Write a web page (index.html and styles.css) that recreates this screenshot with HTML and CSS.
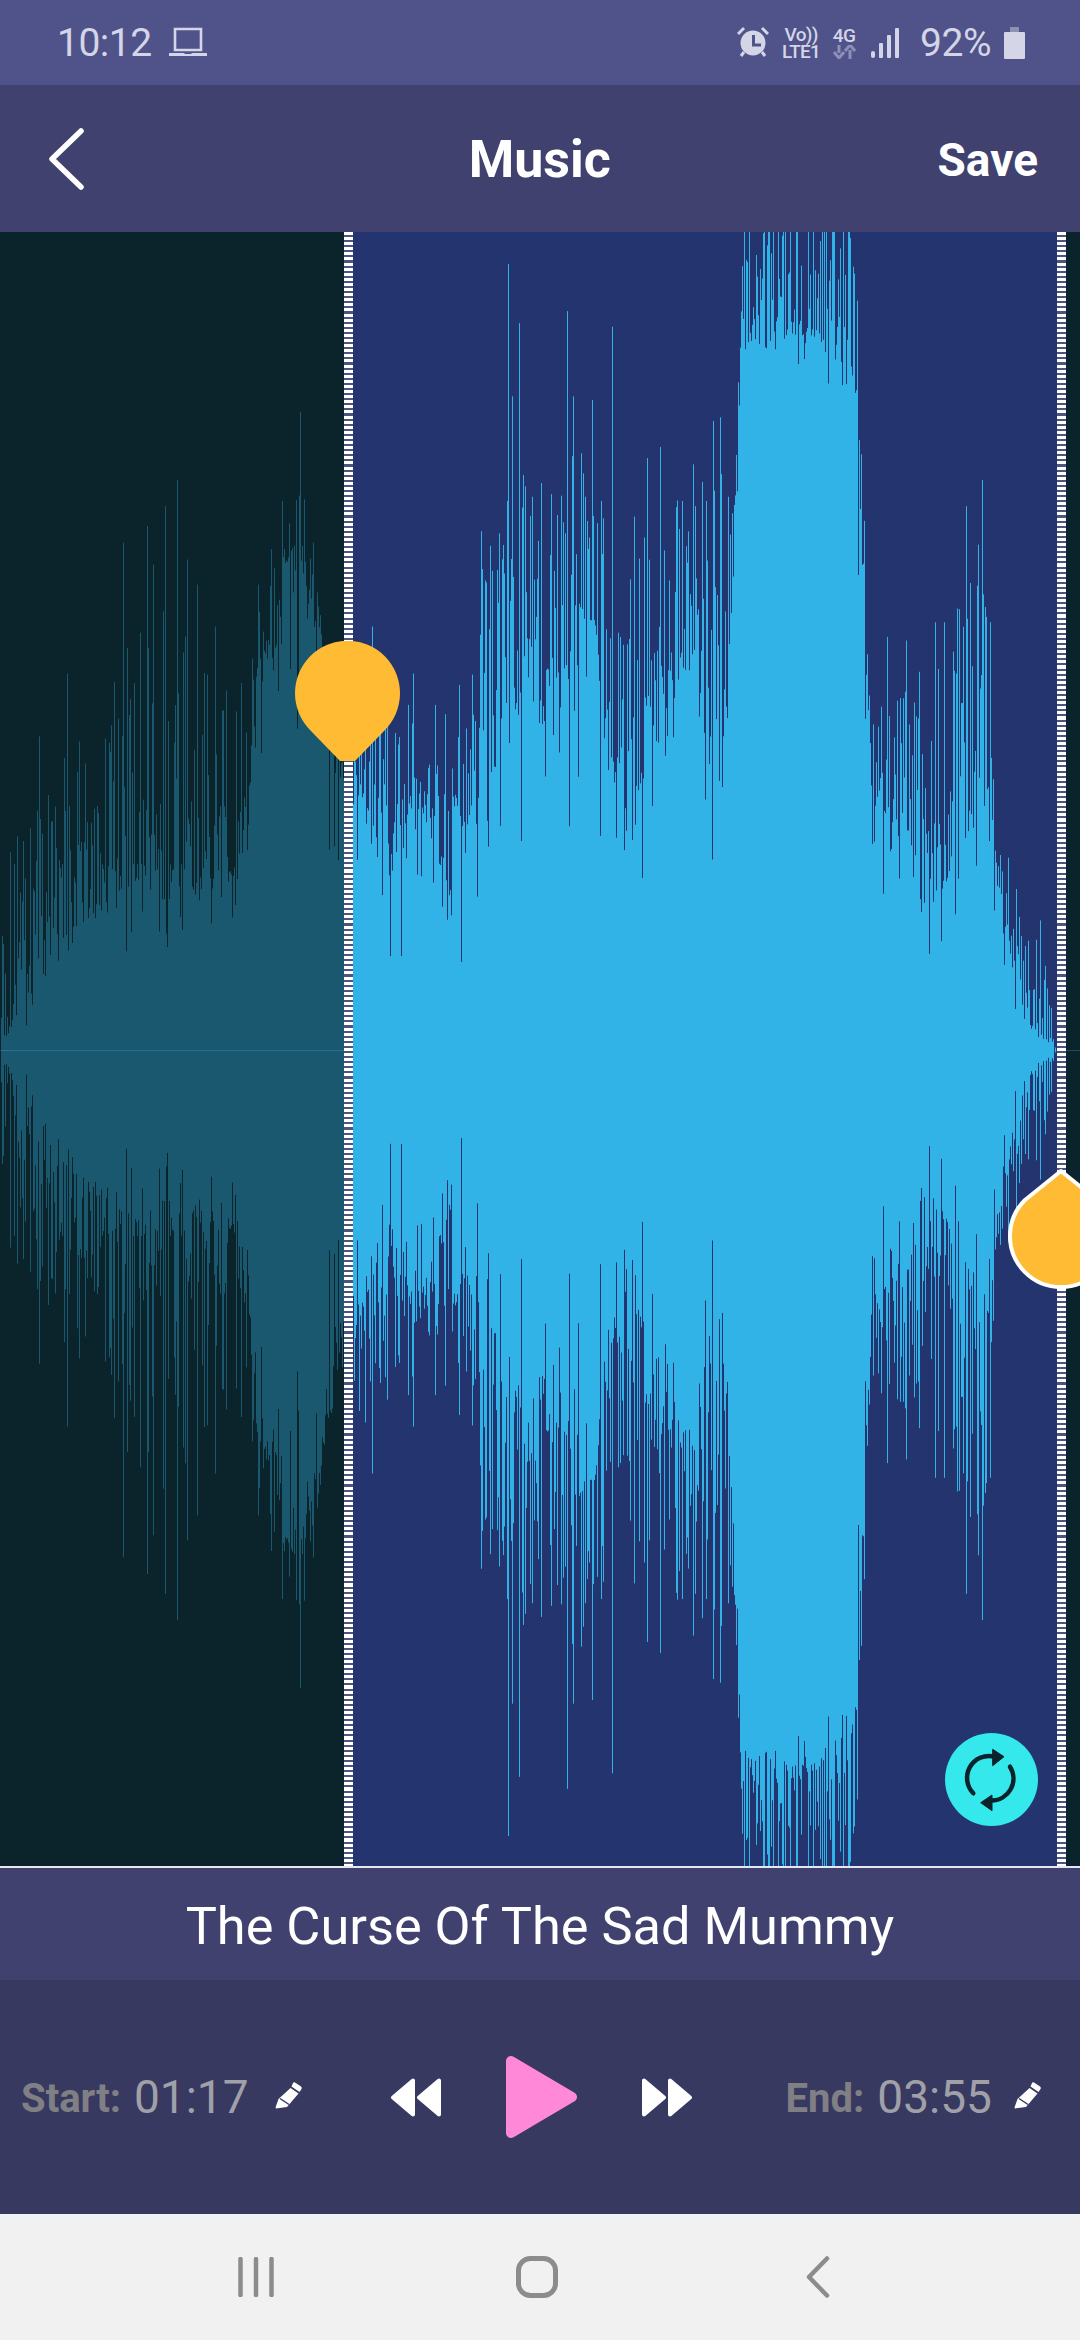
FILE: index.html
```html
<!DOCTYPE html>
<html lang="en">
<head>
<meta charset="utf-8">
<title>Music</title>
<link rel="stylesheet" href="styles.css">
</head>
<body>
<div class="app">
  <header class="status">
    <div class="status-left">
      <span class="clock">10:12</span>
      <svg class="ico-laptop" viewBox="0 0 38 30" width="38" height="30"><path d="M6 2h26v21H6z" fill="none" stroke="currentColor" stroke-width="2.6"/><path d="M0 26h15l1 1h6l1-1h15v3H0z" fill="currentColor"/></svg>
    </div>
    <div class="status-right">
      <svg class="ico-alarm" viewBox="0 0 32 32" width="32" height="32"><circle cx="16" cy="17" r="12.5" fill="currentColor"/><path d="M15 9h3v8.500h6v3h-9z" fill="#50528A"/><path d="M1 8l6-6M31 8l-6-6M4 30l3-4M28 30l-3-4" stroke="currentColor" stroke-width="3"/></svg>
      <div class="volte"><span>Vo))</span><span>LTE1</span></div>
      <div class="net"><span>4G</span><svg viewBox="0 0 24 14" width="24" height="14"><path d="M7 0v8M2 7l5 6 5-6" fill="none" stroke="#8E8FB5" stroke-width="3"/><path d="M18 14V5M13 6l5-6 5 6" fill="none" stroke="#8E8FB5" stroke-width="3"/></svg></div>
      <svg class="ico-signal" viewBox="0 0 28 32" width="28" height="32"><rect x="0" y="24" width="4" height="7" rx="2"/><rect x="8" y="16" width="4" height="15" rx="1"/><rect x="16" y="8" width="4" height="23" rx="1"/><rect x="24" y="1" width="4" height="30" rx="1"/></svg>
      <span class="pct">92%</span>
      <svg class="ico-batt" viewBox="0 0 21 32" width="21" height="32"><path d="M6 0h9v5H6z" fill="#8E8FB5"/><path d="M1 5h19a1 1 0 0 1 1 1v25a1 1 0 0 1-1 1H1a1 1 0 0 1-1-1V6a1 1 0 0 1 1-1z" fill="currentColor"/></svg>
    </div>
  </header>

  <nav class="toolbar">
    <svg class="ico-back" viewBox="0 0 36 62" width="36" height="62"><path d="M33 3L4 31l29 28" fill="none" stroke="#fff" stroke-width="5.500" stroke-linecap="round" stroke-linejoin="round"/></svg>
    <h1 class="page-title">Music</h1>
    <span class="save">Save</span>
  </nav>

  <section class="wave">
    <div class="region region-off-l"></div>
    <div class="marker"></div>
    <div class="region region-on"></div>
    <div class="marker"></div>
    <div class="region region-off-r"></div>
    <canvas id="waveCanvas" class="wave-canvas" width="1080" height="1634"></canvas>
    <svg class="handle handle-start" viewBox="0 0 105 120" width="105" height="120"><path d="M45 120L16 90A52.500 52.500 0 1 1 89 90L60 120Z" fill="#FFBB33"/></svg>
    <svg class="handle handle-end" viewBox="0 0 110 125" width="110" height="125"><path d="M55 3L19 32A51 51 0 1 0 91 32Z" fill="#FFBB33" stroke="#fff" stroke-width="4" stroke-linejoin="round"/></svg>
    <button class="loop" type="button" aria-label="Loop">
      <svg viewBox="0 0 93 93" width="93" height="93"><g fill="none" stroke="#0B232B" stroke-width="4.500" stroke-linecap="round"><path d="M28.300 60.300A22 22 0 0 1 49 23.500"/><path d="M65 33.700A22 22 0 0 1 46.700 67.500"/></g><path d="M59 23.700L47.700 16.300V32.700ZM35.700 69.700L47 62V77.700Z" fill="#0B232B" stroke="#0B232B" stroke-linejoin="round"/></svg>
    </button>
  </section>

  <div class="track">The Curse Of The Sad Mummy</div>

  <section class="controls">
    <div class="time time-start">
      <b>Start:</b><span>01:17</span>
      <svg class="ico-pencil" viewBox="0 0 28 28" width="28" height="28"><path d="M20 1.500l6 4a2 2 0 0 1 .5 2.500L24.500 11 16.500 5.500 18 2a1.500 1.500 0 0 1 2-.5zM15.500 7l8 5.500L12 26 1 27.500 .5 26.500 3.500 18z" fill="#fff"/><path d="M5 17.500l9 6" stroke="#383961" stroke-width="1.500"/></svg>
    </div>
    <div class="transport">
      <svg viewBox="0 0 53 39" width="53" height="39"><path d="M3 19.500L23 2.500V36.500ZM29 19.500L49 2.500V36.500Z" fill="#fff" stroke="#fff" stroke-width="4" stroke-linejoin="round"/></svg>
      <svg class="play" viewBox="0 0 73 84" width="73" height="84"><path d="M6 6L67 42 6 78Z" fill="#FF89D8" stroke="#FF89D8" stroke-width="10" stroke-linejoin="round"/></svg>
      <svg viewBox="0 0 53 39" width="53" height="39"><path d="M50 19.500L30 2.500V36.500ZM24 19.500L4 2.500V36.500Z" fill="#fff" stroke="#fff" stroke-width="4" stroke-linejoin="round"/></svg>
    </div>
    <div class="time time-end">
      <b>End:</b><span>03:55</span>
      <svg class="ico-pencil" viewBox="0 0 28 28" width="28" height="28"><path d="M20 1.500l6 4a2 2 0 0 1 .5 2.500L24.500 11 16.500 5.500 18 2a1.500 1.500 0 0 1 2-.5zM15.500 7l8 5.500L12 26 1 27.500 .5 26.500 3.500 18z" fill="#fff"/><path d="M5 17.500l9 6" stroke="#383961" stroke-width="1.500"/></svg>
    </div>
  </section>

  <footer class="navbar">
    <svg viewBox="0 0 36 40" width="36" height="40"><path d="M2.500 2v36M18 2v36M33.500 2v36" stroke="#8C8C8C" stroke-width="4.500" stroke-linecap="round"/></svg>
    <svg viewBox="0 0 42 42" width="42" height="42"><rect x="2.500" y="2.500" width="37" height="37" rx="12" fill="none" stroke="#8C8C8C" stroke-width="5"/></svg>
    <svg class="nav-back" viewBox="0 0 24 42" width="24" height="42"><path d="M21 2.500L3 21l18 18.500" fill="none" stroke="#8C8C8C" stroke-width="4.500" stroke-linecap="round" stroke-linejoin="round"/></svg>
  </footer>
</div>
<script src="wave.js"></script>
</body>
</html>
```

FILE: styles.css
```css
* { box-sizing: border-box; margin: 0; padding: 0; }
html, body { width: 1080px; height: 2340px; overflow: hidden; }
body { font-family: Roboto, "Liberation Sans", sans-serif; background: #383961; }
.app { width: 1080px; height: 2340px; display: flex; flex-direction: column; overflow: hidden; }

.status { height: 85px; background: #50528A; color: #D4D5E6; display: flex; align-items: center; justify-content: space-between; padding: 0 55px 0 57px; flex: none; }
.status-left, .status-right { display: flex; align-items: center; }
.clock { font-size: 39px; font-weight: 400; letter-spacing: -.5px; }
.ico-laptop { margin-left: 17px; margin-top: -1px; }
.ico-alarm { margin-top: -1px; }
.volte { margin-left: 12px; width: 40px; display: flex; flex-direction: column; align-items: center; font-size: 19px; font-weight: 500; line-height: 17px; letter-spacing: -.7px; }
.net { margin-left: 11px; width: 24px; display: flex; flex-direction: column; align-items: center; font-size: 19px; font-weight: 500; line-height: 17px; gap: 1px; letter-spacing: -.5px; }
.ico-signal { margin-left: 15px; fill: currentColor; }
.pct { margin-left: 21px; font-size: 39px; letter-spacing: -.5px; }
.ico-batt { margin-left: 13px; }

.toolbar { height: 147px; background: #40416F; flex: none; display: flex; align-items: center; padding: 0 42px 0 48px; color: #fff; }
.ico-back { flex: none; }
.page-title { flex: 1; text-align: center; font-size: 52px; font-weight: 700; line-height: 1; margin: 2px 0 0 58px; }
.save { font-size: 46px; font-weight: 700; line-height: 1; margin-top: 2px; }

.wave { height: 1636px; flex: none; display: flex; position: relative; overflow: hidden; border-bottom: 2px solid #E6E8F0; }
.region-off-l { width: 344px; background: #0B232B; }
.region-on { width: 704px; background: #23346F; }
.region-off-r { flex: 1; background: #0B232B; }
.marker { width: 9px; position: relative; z-index: 1; background: repeating-linear-gradient(to bottom, #fff 0, #fff 3px, #4A5680 3px, #4A5680 5.100px); }
.wave-canvas { position: absolute; left: 0; top: 0; width: 1080px; height: 1634px; }
.handle { position: absolute; z-index: 2; display: block; }
.handle-start { left: 295px; top: 409px; }
.handle-end { left: 1006px; top: 936px; }
.loop { position: absolute; z-index: 2; left: 945px; top: 1501px; width: 93px; height: 93px; border: 0; border-radius: 50%; background: #35E8EC; display: flex; }

.track { height: 112px; flex: none; background: #40416F; color: #fff; display: flex; align-items: center; justify-content: center; font-size: 52.300px; padding-top: 4px; }

.controls { height: 234px; flex: none; background: #383961; display: flex; align-items: center; padding-left: 21px; }
.time { display: flex; align-items: center; font-size: 46px; color: #A0A0A8; line-height: 1; }
.time b { font-size: 40px; font-weight: 700; color: #808084; margin-right: 13px; margin-top: 4px; }
.ico-pencil { margin-left: 26px; margin-top: -4px; }
.time-end .ico-pencil { margin-left: 22px; }
.transport { display: flex; align-items: center; gap: 62px; margin-left: 87px; margin-right: 93px; }
.transport svg { display: block; }

.navbar { flex: 1; background: #F1F1F1; display: flex; align-items: center; gap: 242px; padding-left: 238px; }
.nav-back { margin-left: 6px; }
```

FILE: wave.js
```js
// Draws the audio waveform: a solid mirrored core, with a noisy fringe of thin spikes.
(function () {
  var cv = document.getElementById('waveCanvas');
  var ctx = cv.getContext('2d');
  var S = 1.452, V = 1.912, CY = 818;
  function h(py) { return 820 - py / V; }
  var core = [[0,1568],[30,1480],[100,1340],[180,1270],[260,1250],[330,1270],[360,1130],[385,850],[400,760],[420,710],[440,700],[465,800],[480,1000],[500,1080],[530,1080],[560,1200],[620,1090],[650,1260],[680,1100],[720,1000],[760,900],[800,900],[850,800],[880,920],[910,1180],[950,920],[1000,880],[1050,940],[1060,920],[1068,440],[1076,230],[1160,180],[1240,240],[1246,430],[1256,800],[1268,1150],[1300,1200],[1350,1280],[1400,1150],[1430,1100],[1450,1220],[1480,1500],[1530,1568]];
  var fringe = [[0,1350],[15,1190],[55,1050],[97,950],[115,1050],[178,800],[215,720],[240,700],[257,720],[285,800],[312,860],[350,900],[375,720],[395,650],[410,560],[436,450],[460,680],[490,950],[540,820],[600,930],[640,960],[685,900],[699,640],[737,400],[754,450],[785,540],[824,400],[843,470],[859,420],[889,560],[920,600],[939,500],[958,480],[1006,500],[1035,450],[1045,440],[1057,560],[1075,150],[1080,-100],[1240,-100],[1245,200],[1255,600],[1262,950],[1288,850],[1315,850],[1357,800],[1371,800],[1403,620],[1426,560],[1437,800],[1445,1150],[1465,1240],[1510,1360],[1530,1480]];
  var peaks = [[3,1350],[14,1190],[37,1240],[57,968],[75,1130],[97,848],[115,978],[124,1020],[158,980],[178,598],[204,770],[214,566],[222,640],[240,528],[257,478],[271,630],[286,678],[300,850],[312,758],[350,866],[375,678],[386,785],[394,610],[410,518],[430,516],[436,348],[442,515],[455,598],[462,720],[540,758],[592,908],[600,848],[631,908],[646,926],[667,870],[685,850],[699,576],[704,670],[721,650],[737,65],[743,318],[754,178],[762,490],[772,510],[785,484],[800,505],[824,155],[832,318],[843,427],[850,510],[859,325],[873,518],[889,185],[898,770],[920,548],[935,588],[939,436],[958,415],[971,670],[982,530],[990,518],[1006,448],[1025,518],[1035,365],[1045,358],[1057,510],[1069,430],[1075,225],[1245,135],[1255,556],[1262,890],[1288,778],[1303,900],[1315,785],[1330,930],[1357,750],[1371,750],[1392,725],[1403,528],[1418,680],[1426,478],[1437,750],[1442,1050],[1452,1195],[1464,1200],[1475,1260],[1483,1350],[1510,1320],[1520,1450]];
  function lerp(t, x) {
    for (var i = 1; i < t.length; i++) {
      if (x <= t[i][0]) {
        var a = t[i - 1], b = t[i], k = (x - a[0]) / (b[0] - a[0]);
        return a[1] + (b[1] - a[1]) * k;
      }
    }
    return t[t.length - 1][1];
  }
  var seed = 74219;
  function rnd() { seed = (seed * 1664525 + 1013904223) >>> 0; return (seed >>> 8) / 16777216; }
  var amp = [], jag = 0, left = 0;
  for (var x = 0; x < 1056; x++) {
    var zx = x * S;
    if (left-- <= 0) { jag = (rnd() - 0.5) * 0.22; left = 2 + Math.floor(rnd() * 9); }
    var c0 = Math.max(h(lerp(core, zx)), 0), f = Math.max(h(lerp(fringe, zx)), c0);
    var flat = zx > 1072 && zx < 1244;
    var c = flat ? c0 : c0 * (1 + jag);
    var a;
    if (rnd() < 0.2) a = c - rnd() * rnd() * Math.min(flat ? 60 : 230, c * 0.6);
    else a = c + Math.max(f - c, 0) * Math.pow(rnd(), flat ? 1.3 : 1.9);
    amp[x] = a;
  }
  peaks.forEach(function (p) {
    var i = Math.round(p[0] / S);
    if (i >= 0 && i < amp.length) amp[i] = h(p[1]);
  });
  for (x = 0; x < 1056; x++) {
    ctx.fillStyle = x < 344 ? '#19586F' : '#32B3E8';
    ctx.fillRect(x, CY - amp[x], 1, amp[x] * 2);
  }
  ctx.fillStyle = 'rgba(50,179,232,.3)';
  ctx.fillRect(0, CY, 1080, 1);
})();
```
